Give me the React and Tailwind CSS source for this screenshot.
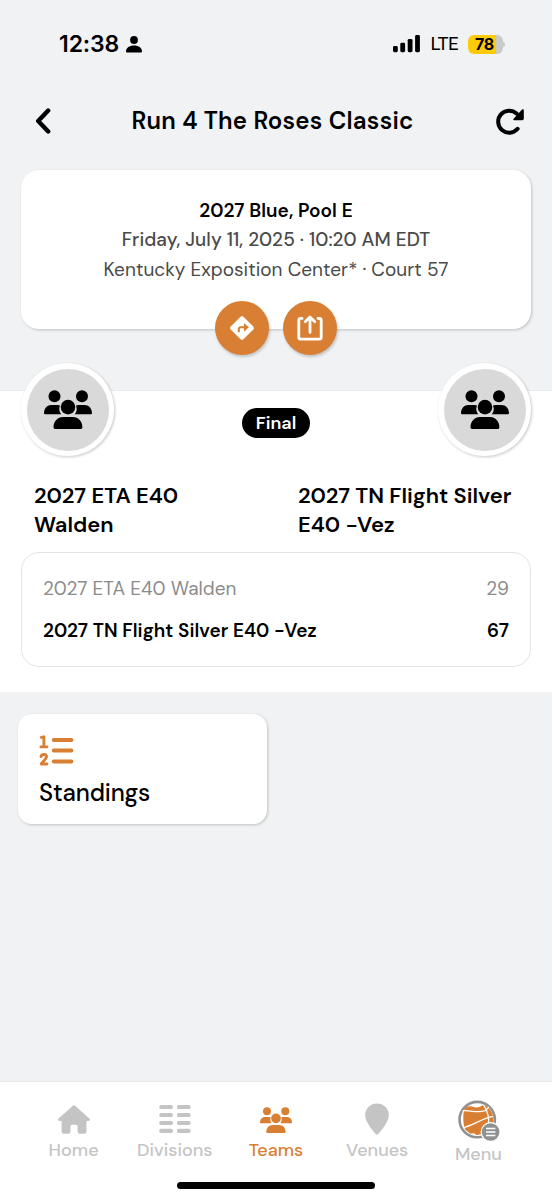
const SCORES = [
  { team: '2027 ETA E40 Walden', points: 29, winner: false },
  { team: '2027 TN Flight Silver E40 -Vez', points: 67, winner: true },
]

const TABS = [
  { label: 'Home', Icon: HomeIcon },
  { label: 'Divisions', Icon: DivisionsIcon },
  { label: 'Teams', Icon: TeamsTabIcon, active: true },
  { label: 'Venues', Icon: PinIcon },
  { label: 'Menu', Icon: MenuIcon },
]

function TeamIcon({ className }) {
  return (
    <svg viewBox="0 0 48 39" fill="currentColor" className={className}>
      <circle cx="10.5" cy="6.2" r="6" />
      <circle cx="38" cy="6.2" r="6" />
      <circle cx="24" cy="17.1" r="7.3" />
      <path d="M1.1 24.3A1.1 1.1 0 0 1 0 23.2C0 18.4 3.2 15 7.5 15H13.5Q15 15 16 15.5A8.8 8.8 0 0 0 17.2 24.3Z" />
      <path d="M46.9 24.3A1.1 1.1 0 0 0 48 23.2C48 18.4 44.8 15 40.5 15H34.5Q33 15 32 15.5A8.8 8.8 0 0 1 30.8 24.3Z" />
      <path d="M11 39A1.5 1.5 0 0 1 9.5 37.4C9.5 31.3 13.5 27 19 27H29C34.5 27 38.4 31.3 38.4 37.4A1.5 1.5 0 0 1 36.9 39Z" />
    </svg>
  )
}

function TeamsTabIcon() {
  return <TeamIcon className="w-8 h-[26px] mt-px" />
}

function HomeIcon() {
  return (
    <svg viewBox="0 0 32 29" fill="currentColor" className="w-8 h-[29px]">
      <path d="M14.9.8a1.7 1.7 0 0 1 2.2 0L31.4 13.4C32.5 14.4 31.9 16 30.5 16H28.4V26.4A2.3 2.3 0 0 1 26.1 28.7H21.8A2.2 2.2 0 0 1 19.6 26.5V21.2A1.5 1.5 0 0 0 18.1 19.7H13.9A1.5 1.5 0 0 0 12.4 21.2V26.5A2.2 2.2 0 0 1 10.2 28.7H5.9A2.3 2.3 0 0 1 3.6 26.4V16H1.5C.1 16-.5 14.4.6 13.4Z" />
    </svg>
  )
}

function DivisionsIcon() {
  return (
    <svg viewBox="0 0 32 28" fill="currentColor" className="w-8 h-7">
      {[0, 8, 15.9, 23.8].map((y) => (
        <g key={y}>
          <rect x="0.3" y={y} width="13.6" height="4.1" rx="1.7" />
          <rect x="18" y={y} width="13.6" height="4.1" rx="1.7" />
        </g>
      ))}
    </svg>
  )
}

function PinIcon() {
  return (
    <svg viewBox="0 0 24 32" fill="currentColor" className="w-6 h-8">
      <path d="M12 .4A11.7 11.7 0 0 1 23.8 12.2C23.8 18.6 16.4 27.6 13.3 31A1.8 1.8 0 0 1 10.7 31C7.6 27.6.2 18.6.2 12.2A11.7 11.7 0 0 1 12 .4Z" />
    </svg>
  )
}

function MenuIcon() {
  return (
    <svg viewBox="0 0 42 42" className="w-[42px] h-[42px]">
      <circle cx="19.2" cy="19.6" r="17.7" fill="#fff" stroke="#8f9092" strokeWidth="2.6" />
      <path
        d="M8 7Q12 5.4 15 6.8T22 6.8Q26.5 3.6 30 7.5C34 11 36 16 35.3 21Q34 30 27 34.4L22 34.2 19 35.2 16 33.2 12.5 33.8 7.5 30C4.6 25 5 12 6.5 9Z"
        fill="#d97f33"
      />
      <g fill="none" stroke="#fff" strokeWidth="1.3">
        <path d="M4.5 10.8C13 10 21 13.8 27.5 10.4L31 7" />
        <path d="M5 27.6C14 25.8 24 18.4 35 16.4" />
        <path d="M25.6 5C29.6 11 31.5 18 30.4 26" />
      </g>
      <circle cx="32.6" cy="32" r="10" fill="#fff" />
      <circle cx="32.6" cy="32" r="8.8" fill="#8f9092" />
      <path d="M28 28.4h9.4M28 32h9.4M28 35.6h9.4" stroke="#fff" strokeWidth="1.5" />
    </svg>
  )
}

function StatusBar() {
  return (
    <div className="flex items-center h-[88px] pl-[59px] pr-[47px] font-['Inter',sans-serif] text-black">
      <span className="text-[23px] font-semibold tracking-[-0.1px]">12:38</span>
      <svg viewBox="0 0 16 17" fill="currentColor" className="w-4 h-[17px] ml-[7px]">
        <circle cx="8" cy="4" r="3.9" />
        <path d="M1.3 16.6C.5 16.6 0 16.1 0 15.3 0 12 3.4 9.6 8 9.6S16 12 16 15.3C16 16.1 15.5 16.6 14.7 16.6Z" />
      </svg>
      <svg viewBox="0 0 27 18" fill="currentColor" className="w-[27px] h-[18px] ml-auto">
        <rect x="0" y="11" width="4.8" height="6.2" rx="1.4" />
        <rect x="7.3" y="7.7" width="4.8" height="9.5" rx="1.4" />
        <rect x="14.7" y="3.9" width="4.8" height="13.3" rx="1.4" />
        <rect x="22.1" y="0" width="4.8" height="17.2" rx="1.4" />
      </svg>
      <span className="mt-0.5 ml-[10px] font-['Roboto',sans-serif] text-[18.5px] tracking-[-0.5px]">LTE</span>
      <div className="flex items-center ml-[10px]">
        <div className="flex items-center justify-center w-[35px] h-[19px] rounded-[6px] bg-linear-to-r from-[#fdcb0a] from-79% to-[#c9cacc] to-79%">
          <span className="text-[16px] font-bold leading-none tracking-[-0.3px] -ml-0.5">78</span>
        </div>
        <div className="w-[2px] h-[5px] rounded-r-full bg-[#c9cacc]" />
      </div>
    </div>
  )
}

function RoundButton({ children }) {
  return (
    <button className="grid place-items-center w-[54px] h-[54px] rounded-full bg-[#d97f33] shadow-[1px_2px_3px_rgba(0,0,0,0.2)]">
      {children}
    </button>
  )
}

function Avatar() {
  return (
    <div className="grid place-items-center w-[93px] h-[93px] rounded-full bg-white shadow-[1px_1px_3px_rgba(0,0,0,0.22)]">
      <div className="grid place-items-center w-[82px] h-[82px] rounded-full bg-[#d9d9d9]">
        <TeamIcon className="w-12 h-[39px]" />
      </div>
    </div>
  )
}

export default function App() {
  return (
    <div className="flex flex-col w-[552px] h-[1200px] overflow-hidden bg-[#f0f2f4] text-black font-['DM_Sans','Inter',sans-serif]">
      <StatusBar />

      <header className="flex items-center justify-between h-[66px] pl-[35px] pr-[28px]">
        <svg viewBox="0 0 16 26" className="w-4 h-[26px]" fill="none" stroke="currentColor" strokeWidth="4.4" strokeLinecap="round" strokeLinejoin="round">
          <path d="M13.2 2.6 3.2 13 13.2 23.4" />
        </svg>
        <h1 className="text-2xl font-semibold tracking-[0.24px] -ml-0.5">Run 4 The Roses Classic</h1>
        <svg viewBox="0 0 28 27" className="w-7 h-[27px]">
          <path d="M20.6 5.6A11 11 0 1 0 21.6 20.8" fill="none" stroke="currentColor" strokeWidth="4" strokeLinecap="round" />
          <path d="M26 1.5Q27.8.8 27.8 2.6V10.6Q27.8 12.2 26.2 12.2H18.4Q16.4 12.2 17.8 10.6Z" fill="currentColor" />
        </svg>
      </header>

      <section className="flex flex-col items-center h-[159px] mt-4 mx-[21px] pt-[26px] rounded-[18px] bg-white text-[19px] leading-[29.3px] text-[#4a4a4a] shadow-[1px_1px_3px_rgba(0,0,0,0.2)]">
        <p className="font-semibold tracking-[0.06px] text-black">2027 Blue, Pool E</p>
        <p className="font-medium tracking-[0.07px]">Friday, July 11, 2025 · 10:20 AM EDT</p>
        <p className="tracking-[0.04px]">Kentucky Exposition Center* · Court 57</p>
        <div className="flex gap-[14px] mt-[17px]">
          <RoundButton>
            <svg viewBox="0 0 26 26" className="w-[26px] h-[26px]">
              <rect x="4" y="4" width="18" height="18" rx="2" fill="#fff" transform="rotate(45 13 13)" />
              <path d="M9.8 17.3V14.2Q9.8 12.3 11.7 12.3H16" fill="none" stroke="#d97f33" strokeWidth="2.1" />
              <path d="M15 7.9 19.8 12.3 15 16.7Z" fill="#d97f33" />
            </svg>
          </RoundButton>
          <RoundButton>
            <svg viewBox="0 0 26 26" className="w-[26px] h-[26px]" fill="none" stroke="#fff" strokeWidth="2.8" strokeLinecap="round" strokeLinejoin="round">
              <path d="M5 3.4H3.6Q1.8 3.4 1.8 5.2V22.3Q1.8 24.1 3.6 24.1H22.4Q24.2 24.1 24.2 22.3V5.2Q24.2 3.4 22.4 3.4H21" />
              <path d="M13 17.4V2.4M8.2 6.8 13 2 17.8 6.8" />
            </svg>
          </RoundButton>
        </div>
      </section>

      <section className="h-[302px] mt-[61px] px-[21px] bg-white border-t border-[#ebecee]">
        <div className="flex items-start justify-between -mt-7">
          <Avatar />
          <span className="flex items-center justify-center w-[68px] h-[30px] mt-[45px] rounded-full bg-black text-white text-[18px] font-semibold">
            Final
          </span>
          <Avatar />
        </div>

        <div className="flex justify-between pl-[13px] mt-[25px] text-[22px] leading-[29px] font-semibold">
          <h2 className="w-[190px]">2027 ETA E40 Walden</h2>
          <h2 className="w-[233px] tracking-[-0.02px]">2027 TN Flight Silver E40 -Vez</h2>
        </div>

        <div className="flex flex-col justify-center gap-[14px] h-[115px] mt-[13px] px-[21px] rounded-[18px] border border-[#e3e3e3] text-[19px] leading-[28px]">
          {SCORES.map((s) => (
            <div
              key={s.team}
              className={s.winner ? 'flex justify-between font-semibold tracking-[0.03px]' : 'flex justify-between text-[#8c8c8c] tracking-[0.03px]'}
            >
              <span>{s.team}</span>
              <span>{s.points}</span>
            </div>
          ))}
        </div>
      </section>

      <section className="grow px-[18px] pt-[22px]">
        <div className="w-[249px] h-[110px] pt-[21px] px-[21px] rounded-[14px] bg-white shadow-[1px_1px_3px_rgba(0,0,0,0.2)]">
          <svg viewBox="0 0 35 32" className="w-[35px] h-8" fill="none" stroke="#d97f33" strokeLinecap="round" strokeLinejoin="round">
            <path d="M14.8 4.9H32.4M14.8 15.6H32.4M14.8 26.4H32.4" strokeWidth="4" />
            <path d="M2.4 2.4 4.9 1.8V11.7M1.9 11.9H8" strokeWidth="2.9" />
            <path d="M2 21.6C2.8 18.6 7.6 18.8 7.5 21.9 7.4 24.3 3.8 26.4 2.2 29H8" strokeWidth="2.9" />
          </svg>
          <h3 className="mt-[8px] text-2xl leading-9 font-medium tracking-[-0.15px]">Standings</h3>
        </div>
      </section>

      <nav className="grid grid-cols-5 h-[119px] px-[23px] pt-[18px] bg-white border-t border-[#e6e7e9]">
        {TABS.map(({ label, Icon, active }) => (
          <a
            key={label}
            className={
              active
                ? 'flex flex-col items-center text-[18px] leading-6 font-medium text-[#d97f33]'
                : 'flex flex-col items-center text-[18px] leading-6 font-medium text-[#c4c4c4]'
            }
          >
            <div className={label === 'Menu' ? 'grid place-items-center h-[42px] ml-0.5' : 'grid place-items-center h-[38px]'}>
              <Icon />
            </div>
            {label}
          </a>
        ))}
      </nav>
      <div className="w-[198px] h-[7px] -mt-[18px] mb-[11px] mx-auto rounded-full bg-black shrink-0" />
    </div>
  )
}
